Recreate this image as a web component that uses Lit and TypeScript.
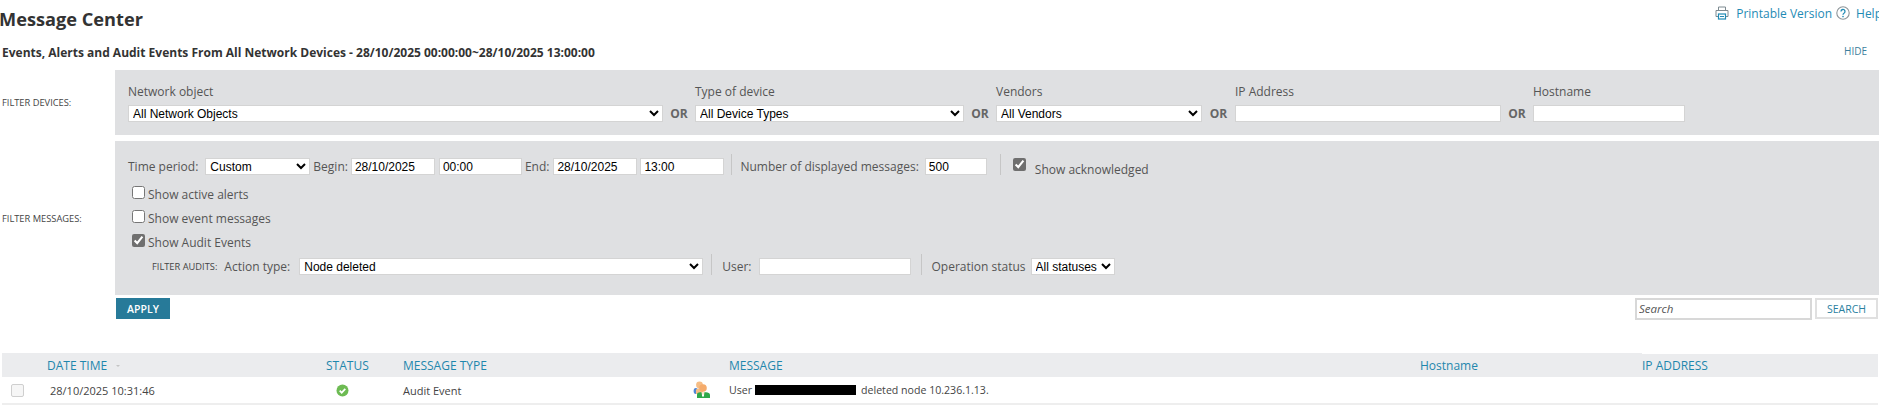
import { LitElement, html, css } from "lit";
import { customElement } from "lit/decorators.js";

@customElement("app-root")
export class AppRoot extends LitElement {
  static styles = css`
    :host { display: block; width: 1879px; height: 405px; overflow: hidden; background: #fff; font-family: "Open Sans", sans-serif; font-size: 12px; color: #555; }
    * { box-sizing: border-box; }
    .top { display: flex; height: 39px; align-items: flex-start; }
    h1 { margin: 0 0 0 -1px; font-size: 18.2px; line-height: 24px; padding-top: 7px; font-weight: 700; color: #333; }
    .links { margin-left: auto; margin-right: -3px; display: flex; align-items: center; height: 26px; color: #1f8bb5; font-size: 12px; flex: none; }
    .links svg { display: block; }
    .print-text { margin: 0 4px 0 7px; }
    .help-text { margin-left: 6px; }
    .sub { display: flex; justify-content: space-between; align-items: center; height: 26px; padding: 0 12px 0 2px; }
    .sub b { font-size: 12px; font-weight: 700; color: #333; }
    .hide { font-size: 10px; color: #3d7f9e; padding-bottom: 2px; }
    .filter { display: grid; grid-template-columns: 115px 1fr; margin-top: 5px; }
    .filter + .filter { margin-top: 6px; }
    .side { font-size: 9.3px; color: #444; padding-left: 2px; display: flex; align-items: center; }
    .panel { background: #dfe0e2; }
    .devices-panel { height: 65px; padding: 14px 0 0 13px; display: flex; }
    .field { display: flex; flex-direction: column; }
    .field label { height: 21px; line-height: 16px; }
    .or { width: 32px; height: 16px; margin-top: 21px; font-weight: 700; font-size: 12px; color: #666; text-align: center; padding-top: 1px; line-height: 16px; }
    .or.wide { width: 33px; }
    select, input[type="text"] { height: 17px; border: 1px solid #d4d4d4; background: #fff; font-family: "Liberation Sans", Arial, sans-serif; font-size: 12px; color: #000; padding: 0 3px; margin: 0; border-radius: 0; outline: none; }
    select { padding: 0; }
    .messages-panel { height: 154px; padding: 13px 0 0 13px; }
    .row { display: flex; align-items: flex-end; height: 21px; }
    .row .txt { line-height: 17px; }
    .div { width: 1px; height: 21px; background: #c6c6c6; flex: none; }
    .check { display: flex; align-items: center; height: 24px; padding-left: 4px; line-height: 24px; }
    .check input { margin: -6px 3px 0 0; width: 13px; height: 13px; accent-color: #6f6f6f; }
    .checks { margin-top: 8px; }
    .ack { display: flex; align-items: center; margin-left: 12px; height: 21px; }
    .ack input { margin: 0 9px 0 0; width: 13px; height: 13px; accent-color: #6f6f6f; }
    .ack span { padding-top: 10px; }
    .audits { display: flex; align-items: flex-end; height: 20px; padding-left: 24px; }
    .audits .tag { font-size: 9.3px; color: #444; line-height: 17px; margin-right: 7px; }
    .actions { display: flex; justify-content: space-between; margin: 3px 1px 0 116px; align-items: flex-start; }
    .apply { width: 54px; height: 21px; background: #277a99; color: #fff; border: 0; font: 600 10.5px "Open Sans", sans-serif; padding: 0; }
    .search { display: flex; gap: 3px; }
    .search input { width: 177px; height: 22px; border: 2px solid #d8d8d8; font-style: italic; font-family: "Open Sans", sans-serif; font-size: 11.5px; padding: 0 2px 2px; color: #555; }
    .search input::placeholder { color: #555; opacity: 1; }
    .search button { width: 63px; height: 21px; border: 2px solid #e0e0e0; background: #fff; color: #2a7f9f; font: 10.5px "Open Sans", sans-serif; padding: 0; }
    .grid { margin: 33px 1px 0 2px; display: grid; grid-template-columns: 45px 279px 77px 290px 36px 691px 222px 1fr; }
    .head { height: 24px; background: #ebecee; color: #1f87ad; display: flex; align-items: center; font-size: 12px; white-space: nowrap; }
    .head.last { border-top: 1px solid #fff; }
    .cell { height: 28px; border-bottom: 2px solid #eeeeee; font-size: 11px; color: #444; display: flex; align-items: center; white-space: nowrap; }
    .cell.msg { font-size: 10.6px; }
    .sort { margin-left: 9px; width: 0; height: 0; border: 2px solid transparent; border-top: 2px solid #c4c4c4; margin-top: 3px; }
    .box { width: 13px; height: 13px; margin-left: 9px; border: 1px solid #cfcfcf; border-radius: 2px; background: #f6f6f6; }
    .redact { display: inline-block; width: 101px; height: 10px; background: #000; margin: 0 5px 0 3px; }
    .date { padding-left: 3px; }
    .status { padding-left: 10px; }
  `;

  render() {
    return html`
      <div class="top">
        <h1>Message Center</h1>
        <div class="links">
          <svg width="14" height="14" viewBox="0 0 14 14" fill="none">
            <path d="M3.5 4V1h7v3M3 10.5H1V4.5h12v6h-2" stroke="#7d8a90" stroke-width="1"/>
            <rect x="3.5" y="8" width="7" height="5" stroke="#1f8bb5" stroke-width="1.2"/>
            <path d="M5 10.5h4" stroke="#1f8bb5"/>
          </svg>
          <span class="print-text">Printable Version</span>
          <svg width="14" height="14" viewBox="0 0 14 14" fill="none">
            <circle cx="7" cy="7" r="6.2" stroke="#8d9599" stroke-width="1.1"/>
            <path d="M5 5.5a2 2 0 1 1 3 1.7c-.7.4-1 .8-1 1.6" stroke="#1f8bb5" stroke-width="1.3"/>
            <circle cx="7" cy="10.6" r=".8" fill="#1f8bb5"/>
          </svg>
          <span class="help-text">Help</span>
        </div>
      </div>
      <div class="sub">
        <b>Events, Alerts and Audit Events From All Network Devices - 28/10/2025 00:00:00~28/10/2025 13:00:00</b>
        <span class="hide">HIDE</span>
      </div>

      <div class="filter">
        <div class="side">FILTER DEVICES:</div>
        <div class="panel devices-panel">
          <div class="field"><label>Network object</label>
            <select style="width:535px"><option>All Network Objects</option></select></div>
          <div class="or">OR</div>
          <div class="field"><label>Type of device</label>
            <select style="width:269px"><option>All Device Types</option></select></div>
          <div class="or">OR</div>
          <div class="field"><label>Vendors</label>
            <select style="width:206px"><option>All Vendors</option></select></div>
          <div class="or wide">OR</div>
          <div class="field"><label>IP Address</label>
            <input type="text" style="width:266px" /></div>
          <div class="or">OR</div>
          <div class="field"><label>Hostname</label>
            <input type="text" style="width:152px" /></div>
        </div>
      </div>

      <div class="filter">
        <div class="side">FILTER MESSAGES:</div>
        <div class="panel messages-panel">
          <div class="row">
            <span class="txt" style="margin-right:7px">Time period:</span>
            <select style="width:105px"><option>Custom</option></select>
            <span class="txt" style="margin:0 3px 0 3px">Begin:</span>
            <input type="text" style="width:84px" value="28/10/2025" />
            <input type="text" style="width:83px;margin-left:4px" value="00:00" />
            <span class="txt" style="margin:0 4px 0 3px">End:</span>
            <input type="text" style="width:84px" value="28/10/2025" />
            <input type="text" style="width:84px;margin-left:3px" value="13:00" />
            <span class="div" style="margin:0 8px 0 7px"></span>
            <span class="txt" style="margin-right:6px">Number of displayed messages:</span>
            <input type="text" style="width:62px" value="500" />
            <span class="div" style="margin-left:13px"></span>
            <label class="ack"><input type="checkbox" checked /><span>Show acknowledged</span></label>
          </div>
          <div class="checks">
            <label class="check"><input type="checkbox" />Show active alerts</label>
            <label class="check"><input type="checkbox" />Show event messages</label>
            <label class="check"><input type="checkbox" checked />Show Audit Events</label>
          </div>
          <div class="audits">
            <span class="tag">FILTER AUDITS:</span>
            <span class="txt" style="margin-right:9px">Action type:</span>
            <select style="width:404px"><option>Node deleted</option></select>
            <span class="div" style="margin:0 10px 0 8px"></span>
            <span class="txt" style="margin-right:8px">User:</span>
            <input type="text" style="width:152px" />
            <span class="div" style="margin:0 9px 0 10px"></span>
            <span class="txt" style="margin-right:5px">Operation status</span>
            <select style="width:84px"><option>All statuses</option></select>
          </div>
        </div>
      </div>

      <div class="actions">
        <button class="apply">APPLY</button>
        <div class="search">
          <input type="text" placeholder="Search" />
          <button>SEARCH</button>
        </div>
      </div>

      <div class="grid">
        <div class="head"></div>
        <div class="head">DATE TIME<span class="sort"></span></div>
        <div class="head">STATUS</div>
        <div class="head">MESSAGE TYPE</div>
        <div class="head"></div>
        <div class="head">MESSAGE</div>
        <div class="head">Hostname</div>
        <div class="head last">IP ADDRESS</div>

        <div class="cell"><span class="box"></span></div>
        <div class="cell date">28/10/2025 10:31:46</div>
        <div class="cell status">
          <svg width="13" height="13" viewBox="0 0 13 13">
            <circle cx="6.5" cy="6.5" r="6" fill="#6dbb53"/>
            <path d="M3.7 6.7l2 2 3.6-3.8" fill="none" stroke="#fff" stroke-width="1.7"/>
          </svg>
        </div>
        <div class="cell">Audit Event</div>
        <div class="cell">
          <svg width="18" height="18" viewBox="0 0 18 18">
            <ellipse cx="2.8" cy="10" rx="2.2" ry="3" fill="#4f86d6"/>
            <circle cx="6.5" cy="4" r="3.4" fill="#f6bd85"/>
            <path d="M3 9c0-2 7-2 7 0v4H3z" fill="#f6bd85"/>
            <circle cx="10" cy="7" r="3.8" fill="#f5ab6b"/>
            <path d="M4 17v-3.5c0-1.5 1.6-2.3 3-2.3h6c2 0 4 .8 4 2.8v3z" fill="#2fa84a"/>
            <path d="M8.5 11h3L11 14.5H9z" fill="#f8e3c8"/>
            <rect x="9" y="13.5" width="2" height="2" fill="#fff"/>
          </svg>
        </div>
        <div class="cell msg">User <span class="redact"></span> deleted node 10.236.1.13.</div>
        <div class="cell"></div>
        <div class="cell"></div>
      </div>
    `;
  }
}
